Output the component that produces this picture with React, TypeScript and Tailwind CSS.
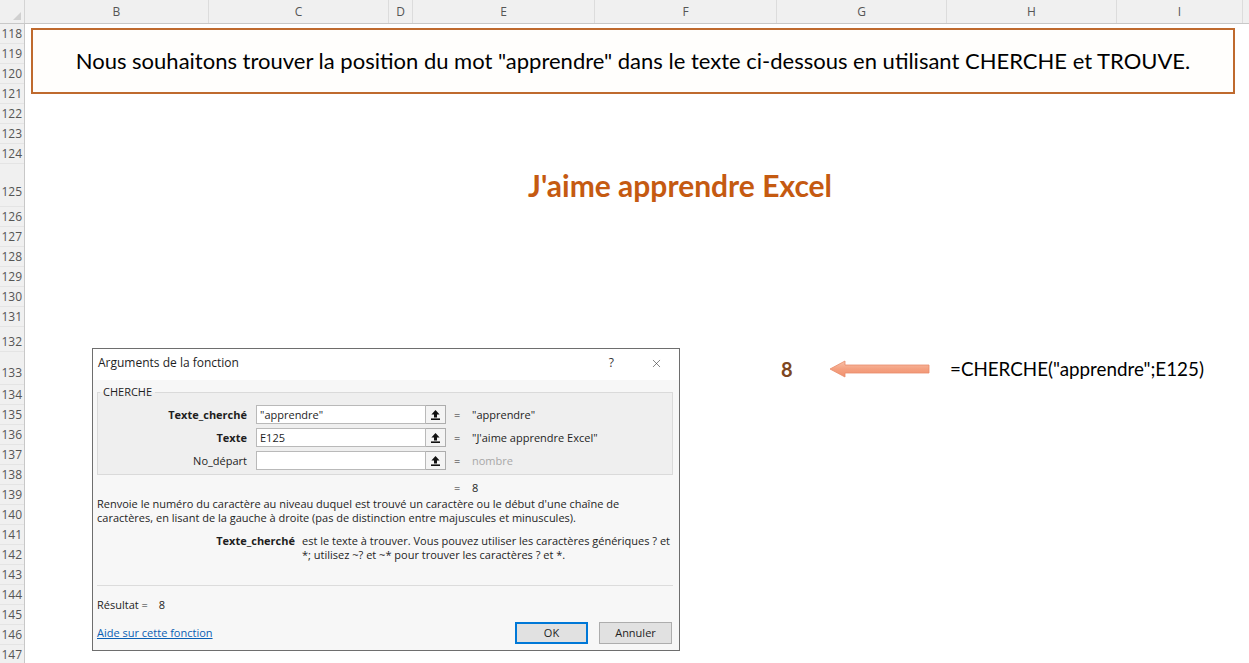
import { X } from "lucide-react";

const columns: [string, number][] = [
  ["B", 184],
  ["C", 180],
  ["D", 24],
  ["E", 182],
  ["F", 182],
  ["G", 170],
  ["H", 170],
  ["I", 126],
];

// [row number, height, bottom padding of the number]
const rows: [number, number, number][] = [
  [118, 20, 0], [119, 20, 0], [120, 20, 0], [121, 20, 0], [122, 20, 0],
  [123, 20, 0], [124, 20, 0], [125, 43, 5], [126, 20, 0], [127, 20, 0],
  [128, 20, 0], [129, 20, 0], [130, 20, 0], [131, 20, 0], [132, 25, 0],
  [133, 33, 2], [134, 20, 0], [135, 20, 0], [136, 20, 0], [137, 20, 0],
  [138, 20, 0], [139, 20, 0], [140, 20, 0], [141, 20, 0], [142, 20, 0],
  [143, 20, 0], [144, 20, 0], [145, 20, 0], [146, 20, 0], [147, 20, 0],
];

function RefIcon() {
  return (
    <svg width="9" height="10" viewBox="0 0 9 10">
      <path d="M4.5 0 L8.6 4.4 L6 4.4 L6 7.4 L3 7.4 L3 4.4 L0.4 4.4 Z" fill="#111" />
      <rect x="0" y="8.4" width="9" height="1.6" fill="#111" />
    </svg>
  );
}

function ArgRow({ label, bold, value, result, muted }: { label: string; bold?: boolean; value: string; result: string; muted?: boolean }) {
  return (
    <div className="flex items-center h-[19px]">
      <div className={`w-[149px] text-right ${bold ? "font-bold" : ""}`}>{label}</div>
      <div className="ml-[9px] w-[170px] h-[19px] border border-[#b9b9b9] bg-white px-[3px] leading-[17px]">{value}</div>
      <div className="w-[20px] h-[19px] border border-[#adadad] border-l-0 bg-[#f4f4f4] flex items-center justify-center">
        <RefIcon />
      </div>
      <span className="ml-[8px] w-[18px]">=</span>
      <span className={muted ? "text-[#a8a8a8]" : ""}>{result}</span>
    </div>
  );
}

function ArgumentsDialog() {
  return (
    <div className="ml-[67px] w-[588px] h-[303px] shrink-0 border border-[#6e6e6e] bg-[#f7f7f7] flex flex-col font-['Open_Sans',sans-serif] text-[11px] leading-[14px] text-[#1e1e1e]">
      <div className="h-[31px] bg-white flex items-center pl-[5px] pb-[3px]">
        <span className="text-[12px]">Arguments de la fonction</span>
        <span className="ml-auto text-[12px] text-[#333]">?</span>
        <X size={13} strokeWidth={1.1} className="ml-[36px] mr-[16px] text-[#333]" />
      </div>
      <div className="pl-[4px] pr-[6px] flex flex-col">
        <fieldset className="mt-[5px] border border-[#dadada] bg-[#efefef] pt-[6px] pb-[4px] flex flex-col gap-[4px]">
          <legend className="ml-[2px] px-[3px] leading-[14px]">CHERCHE</legend>
          <ArgRow label="Texte_cherché" bold value={'"apprendre"'} result={'"apprendre"'} />
          <ArgRow label="Texte" bold value="E125" result={'"J\'aime apprendre Excel"'} />
          <ArgRow label="No_départ" value="" result="nombre" muted />
        </fieldset>
        <div className="mt-[6px] ml-[357px] flex">
          <span className="w-[18px]">=</span>
          <span>8</span>
        </div>
        <p className="mt-[2px]">
          Renvoie le numéro du caractère au niveau duquel est trouvé un caractère ou le début d'une chaîne de
          <br />
          caractères, en lisant de la gauche à droite (pas de distinction entre majuscules et minuscules).
        </p>
        <div className="mt-[9px] flex">
          <div className="w-[198px] text-right font-bold">Texte_cherché</div>
          <div className="ml-[7px]">
            est le texte à trouver. Vous pouvez utiliser les caractères génériques ? et
            <br />
            *; utilisez ~? et ~* pour trouver les caractères ? et *.
          </div>
        </div>
        <div className="mt-[23px] border-t border-[#dcdcdc]" />
        <div className="mt-[12px]">
          Résultat =<span className="ml-[11px]">8</span>
        </div>
        <div className="mt-[10px] flex items-center h-[22px]">
          <span className="text-[#0a5fb4] underline">Aide sur cette fonction</span>
          <button className="ml-auto w-[73px] h-[22px] border-2 border-[#0078d7] bg-[#e1e1e1] text-[11px]">OK</button>
          <button className="ml-[11px] mr-[1px] w-[73px] h-[22px] border border-[#adadad] bg-[#e1e1e1] text-[11px]">Annuler</button>
        </div>
      </div>
    </div>
  );
}

function LeftArrow() {
  return (
    <svg width="102" height="18" viewBox="0 0 102 18">
      <defs>
        <linearGradient id="arrowFill" x1="0" y1="0" x2="0" y2="1">
          <stop offset="0" stopColor="#f8c3ab" />
          <stop offset="0.5" stopColor="#f4a080" />
          <stop offset="1" stopColor="#f0926f" />
        </linearGradient>
      </defs>
      <path d="M1 9 L16 1 L16 5 L100 5 L100 13 L16 13 L16 17 Z" fill="url(#arrowFill)" stroke="#e98c69" strokeWidth="0.8" />
    </svg>
  );
}

export default function App() {
  return (
    <div className="w-[1249px] h-[663px] overflow-hidden bg-white">
      {/* column headers */}
      <div className="flex h-[24px] bg-[#f0f0f0] border-b border-[#c8c8c8] font-['Open_Sans',sans-serif] text-[12px] text-[#555]">
        <div className="w-[25px] shrink-0 border-r border-[#d4d4d4] flex items-end justify-end p-[3px]">
          <svg width="8" height="8" viewBox="0 0 8 8">
            <path d="M8 0 L8 8 L0 8 Z" fill="#d0d0d0" />
          </svg>
        </div>
        {columns.map(([name, w]) => (
          <div key={name} style={{ width: w }} className="shrink-0 border-r border-[#dcdcdc] flex items-center justify-center">
            {name}
          </div>
        ))}
      </div>

      <div className="flex">
        {/* row headers */}
        <div className="w-[25px] shrink-0 bg-[#f0f0f0] border-r border-[#c8c8c8] font-['Open_Sans',sans-serif] text-[12px] text-[#555]">
          {rows.map(([n, h, pb]) => (
            <div key={n} style={{ height: h, paddingBottom: pb }} className="flex items-end justify-end pr-[2px] border-b border-[#e4e4e4] leading-[19px]">
              {n}
            </div>
          ))}
        </div>

        {/* sheet content */}
        <div className="flex-1 flex flex-col font-['Lato',sans-serif]">
          <div className="mt-[4px] ml-[6px] w-[1204px] h-[66px] border-2 border-[#bf6a2e] bg-[#fffefc] flex items-center justify-center pb-[2px] text-[22px] text-black">
            Nous souhaitons trouver la position du mot "apprendre" dans le texte ci-dessous en utilisant CHERCHE et TROUVE.
          </div>

          <div className="mt-[75px] h-[32px] leading-[32px] pl-[503px] text-[30px] font-bold text-[#c55a11]">
            J'aime apprendre Excel
          </div>

          <div className="mt-[147px] flex items-start">
            <ArgumentsDialog />
            <div className="ml-[101px] pt-[9px] flex items-center">
              <span className="w-[48px] text-[20px] font-bold text-[#7d4620] leading-[24px]">8</span>
              <LeftArrow />
              <span className="ml-[19px] text-[18.8px] text-black leading-[24px]">=CHERCHE("apprendre";E125)</span>
            </div>
          </div>
        </div>
      </div>
    </div>
  );
}
